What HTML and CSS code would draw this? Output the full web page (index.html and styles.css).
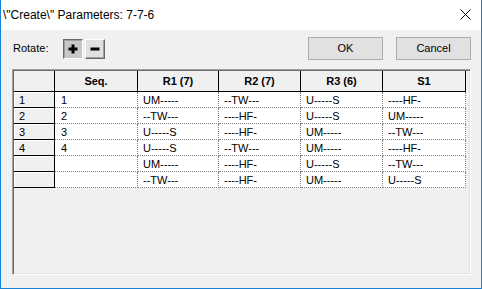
FILE: index.html
```html
<!DOCTYPE html>
<html>
<head>
<meta charset="utf-8">
<link rel="stylesheet" href="styles.css">
</head>
<body>
<div class="window">
  <div class="titlebar">
    <span class="title">\"Create\" Parameters: 7-7-6</span>
    <svg class="close" width="11" height="11" viewBox="0 0 11 11"><path d="M0.5 0.5 L10.5 10.5 M10.5 0.5 L0.5 10.5" stroke="#000" stroke-width="1" fill="none"/></svg>
  </div>
  <div class="content">
    <div class="toolbar">
      <span class="label">Rotate:</span>
      <div class="rot-group">
        <div class="rot pressed">
          <svg width="10" height="10" viewBox="0 0 10 10"><path d="M3.5 0.5h3v3h3v3h-3v3h-3v-3h-3v-3h3z" fill="#000"/></svg>
        </div>
        <div class="rot">
          <svg width="10" height="4" viewBox="0 0 10 4"><rect x="0.5" y="0.5" width="9" height="3" fill="#000"/></svg>
        </div>
      </div>
      <div class="spacer"></div>
      <div class="btn">OK</div>
      <div class="btn">Cancel</div>
    </div>
    <div class="grid">
      <table>
        <thead>
          <tr>
            <th class="c0"></th>
            <th class="c1">Seq.</th>
            <th class="c2">R1 (7)</th>
            <th class="c3">R2 (7)</th>
            <th class="c4">R3 (6)</th>
            <th class="c5">S1</th>
          </tr>
        </thead>
        <tbody>
          <tr><td class="rh">1</td><td>1</td><td>UM-----</td><td>--TW---</td><td>U-----S</td><td>----HF-</td></tr>
          <tr><td class="rh">2</td><td>2</td><td>--TW---</td><td>----HF-</td><td>U-----S</td><td>UM-----</td></tr>
          <tr><td class="rh">3</td><td>3</td><td>U-----S</td><td>----HF-</td><td>UM-----</td><td>--TW---</td></tr>
          <tr><td class="rh">4</td><td>4</td><td>U-----S</td><td>--TW---</td><td>UM-----</td><td>----HF-</td></tr>
          <tr><td class="rh"></td><td></td><td>UM-----</td><td>----HF-</td><td>U-----S</td><td>--TW---</td></tr>
          <tr><td class="rh"></td><td></td><td>--TW---</td><td>----HF-</td><td>UM-----</td><td>U-----S</td></tr>
        </tbody>
      </table>
    </div>
  </div>
</div>
</body>
</html>
```

FILE: styles.css
```css
* { box-sizing: border-box; }
html, body { margin: 0; padding: 0; }
body {
  width: 482px;
  height: 289px;
  overflow: hidden;
  font-family: "Liberation Sans", Arial, sans-serif;
  font-size: 11px;
  color: #000;
  background: #f0f0f0;
}
.window {
  width: 482px;
  height: 289px;
  border-left: 1px solid #1883d7;
  border-right: 1px solid #1883d7;
  border-bottom: 1px solid #1883d7;
  display: flex;
  flex-direction: column;
  background: #f0f0f0;
}
.titlebar {
  height: 30px;
  flex: none;
  background: #fff;
  display: flex;
  align-items: center;
  padding-left: 2px;
  padding-right: 10px;
}
.title {
  font-size: 12px;
  flex: 1;
  padding-bottom: 1px;
}
.close { display: block; margin-bottom: 2px; }
.content {
  flex: 1;
  padding: 7px 10px 0 11px;
}
.toolbar {
  height: 23px;
  display: flex;
  align-items: center;
}
.label {
  width: 51px;
  padding-left: 1px;
  padding-bottom: 1px;
}
.rot-group {
  display: flex;
  gap: 2px;
}
.rot {
  width: 20px;
  height: 20px;
  background: #e0e0e0;
  border-top: 1px solid #fff;
  border-left: 1px solid #fff;
  border-right: 1px solid #696969;
  border-bottom: 1px solid #696969;
  box-shadow: inset -1px -1px 0 #a0a0a0;
  display: flex;
  align-items: center;
  justify-content: center;
}
.rot.pressed {
  background: #c8c8c8;
  border-top: 1px solid #696969;
  border-left: 1px solid #696969;
  border-right: 1px solid #fff;
  border-bottom: 1px solid #fff;
  box-shadow: inset 1px 1px 0 #a0a0a0;
}
.rot svg { display: block; }
.spacer { flex: 1; }
.btn {
  width: 75px;
  height: 23px;
  background: #e1e1e1;
  border: 1px solid #adadad;
  display: flex;
  align-items: center;
  justify-content: center;
  margin-left: 13px;
  padding-bottom: 1px;
}
.grid {
  margin-top: 9px;
  width: 459px;
  height: 206px;
  border-top: 1px solid #a0a0a0;
  border-left: 1px solid #a0a0a0;
  border-right: 1px solid #fff;
  border-bottom: 1px solid #fff;
  box-shadow: inset 1px 1px 0 #696969, inset -1px -1px 0 #e3e3e3;
  padding: 1px 0 0 1px;
  background: #f0f0f0;
}
table {
  border-collapse: separate;
  border-spacing: 0;
  table-layout: fixed;
  width: 452px;
}
th {
  height: 21px;
  background: #f0f0f0;
  border-right: 1px solid #000;
  border-bottom: 1px solid #000;
  font-weight: bold;
  text-align: center;
  padding: 0;
  padding-bottom: 1px;
}
.c0 { width: 41px; }
.c1 { width: 83px; }
.c2 { width: 81px; }
.c3 { width: 82px; }
.c4 { width: 82px; }
.c5 { width: 83px; }
td {
  height: 16px;
  background: #fff;
  border-right: 1px dotted #808080;
  border-bottom: 1px dotted #808080;
  padding: 0 0 0 5px;
  white-space: nowrap;
  overflow: hidden;
  line-height: 14px;
}
td.rh {
  background: #f0f0f0;
  border-right: 1px solid #000;
  border-bottom: 1px solid #000;
  box-shadow: inset 1px 1px 0 #fff;
  padding-left: 5px;
}
tbody tr td:nth-child(2) { padding-left: 6px; }
```
